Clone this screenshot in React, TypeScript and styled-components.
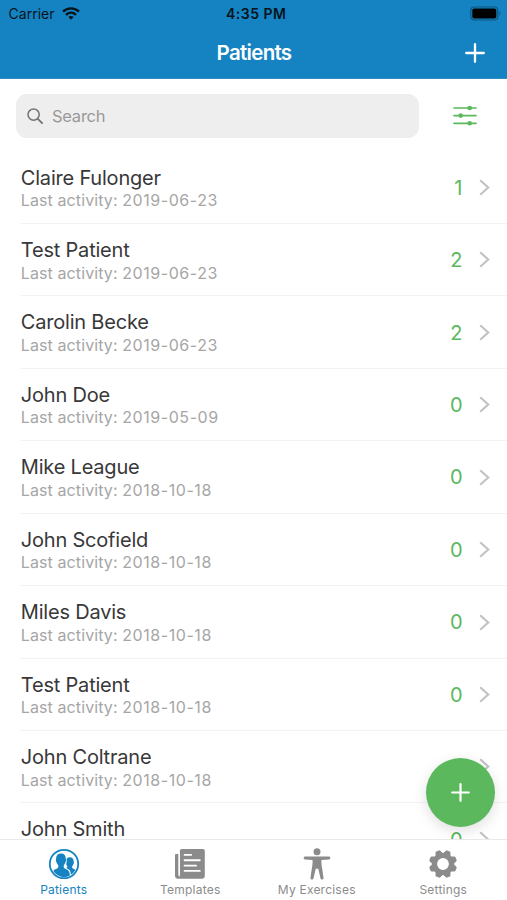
import React from "react";
import styled, { createGlobalStyle } from "styled-components";

const BLUE = "#1583c1";
const GREEN = "#5bb85d";

const GlobalStyle = createGlobalStyle`
  *, *::before, *::after { box-sizing: border-box; }
  html, body { margin: 0; padding: 0; overflow: hidden; }
  body { font-family: Inter, "Liberation Sans", sans-serif; background: #fff; }
  button { border: 0; padding: 0; background: none; font: inherit; }
  svg { display: block; flex: none; }
`;

const Screen = styled.div`
  position: relative;
  display: flex;
  flex-direction: column;
  width: 507px;
  height: 900px;
  overflow: hidden;
  background: #fff;
`;

const Header = styled.header`
  flex: none;
  height: 79px;
  background: ${BLUE};
  border-bottom: 1px solid #2f8fc6;
`;

const StatusBar = styled.div`
  display: grid;
  grid-template-columns: 1fr auto 1fr;
  align-items: center;
  height: 27px;
  padding: 0 6px 0 8.5px;
  color: #06131c;
`;

const Carrier = styled.div`
  display: flex;
  align-items: center;
  gap: 7px;
  font-size: 14px;
  letter-spacing: 0.02px;
`;

const Clock = styled.div`
  font-size: 14px;
  font-weight: 600;
  letter-spacing: 0.5px;
  padding-left: 3px;
`;

const BatterySlot = styled.div`
  justify-self: end;
`;

const NavBar = styled.div`
  display: grid;
  grid-template-columns: 1fr auto 1fr;
  align-items: center;
  height: 51px;
  padding: 0 22.5px 0 23.5px;
  color: #fff;
`;

const Title = styled.h1`
  grid-column: 2;
  margin: 0;
  font-size: 20.5px;
  line-height: 24px;
  font-weight: 600;
  letter-spacing: -0.7px;
`;

const AddButton = styled.button`
  justify-self: end;
  color: #fff;
`;

const SearchRow = styled.div`
  flex: none;
  display: flex;
  align-items: center;
  height: 72.5px;
  padding: 1.5px 30px 0 15.5px;
`;

const SearchField = styled.label`
  display: flex;
  align-items: center;
  gap: 8px;
  width: 403px;
  height: 44px;
  padding-left: 11.5px;
  border-radius: 11px;
  background: #eee;
  color: #999;
  font-size: 16.5px;
  letter-spacing: -0.25px;
`;

const FilterButton = styled.button`
  margin-left: auto;
  color: ${GREEN};
`;

const PatientList = styled.ul`
  flex: 1;
  min-height: 0;
  margin: 0;
  padding: 0;
  overflow: hidden;
  list-style: none;
`;

const PatientRow = styled.li`
  display: flex;
  align-items: center;
  height: 72.45px;
  margin-left: 20px;
  padding-right: 17px;
  border-bottom: 1px solid #f3f3f3;
`;

const PatientInfo = styled.div`
  flex: 1;
  padding: 2.6px 0 0 0.8px;
`;

const PatientName = styled.div`
  color: #383838;
  font-size: 20px;
  line-height: 24.6px;
  letter-spacing: -0.2px;
`;

const Activity = styled.div`
  color: #a6a6a6;
  font-size: 16px;
  line-height: 21.4px;
  letter-spacing: 0.1px;
`;

const ActivityDate = styled.span`
  letter-spacing: 0.56px;
`;

const Count = styled.div`
  margin-right: 16.5px;
  color: ${GREEN};
  font-size: 20px;
  padding-top: 1px;
`;

const ChevronSlot = styled.div`
  padding-top: 0.5px;
`;

const FloatingButton = styled.button`
  position: absolute;
  left: 426px;
  top: 757.5px;
  display: grid;
  place-items: center;
  width: 69px;
  height: 69px;
  border-radius: 50%;
  background: ${GREEN};
  color: #fff;
  box-shadow: 0 4px 14px rgba(0, 0, 0, 0.13);
`;

const TabBar = styled.nav`
  flex: none;
  display: grid;
  grid-template-columns: repeat(4, 126.5px);
  height: 61px;
  padding-left: 0.5px;
  border-top: 1px solid #e9e9e9;
  background: #fff;
`;

const Tab = styled.div<{ $active?: boolean }>`
  display: flex;
  flex-direction: column;
  align-items: center;
  padding-top: 7.5px;
  color: ${({ $active }) => ($active ? BLUE : "#8b8b8b")};
`;

const TabLabel = styled.span`
  margin-top: 2.5px;
  font-size: 12px;
  line-height: 16px;
  white-space: nowrap;
  letter-spacing: 0.22px;
`;

const WifiIcon = () => (
  <svg width="18" height="13" viewBox="0 0 18 13" fill="none" stroke="currentColor" strokeWidth="2.4">
    <path d="M1 4.6C5.6.3 12.4.3 17 4.6" />
    <path d="M4 7.8c2.9-2.7 7.1-2.7 10 0" />
    <path d="M6.4 10.1c1.6-1.4 3.6-1.4 5.2 0L9 12.8z" fill="currentColor" stroke="none" />
  </svg>
);

const BatteryIcon = () => (
  <svg width="31" height="15" viewBox="0 0 31 15">
    <rect x=".8" y="1" width="27" height="13" rx="3.5" fill="none" stroke="#0c5580" strokeWidth="1.2" />
    <rect x="2.3" y="2.5" width="24" height="10" rx="2" fill="#000" />
    <path d="M29.4 5.3c1.4.8 1.4 3.6 0 4.4z" fill="#0c5580" />
  </svg>
);

const PlusIcon = ({ size, stroke }: { size: number; stroke: number }) => (
  <svg width={size} height={size} viewBox={`0 0 ${size} ${size}`} stroke="currentColor" strokeWidth={stroke} strokeLinecap="round">
    <path d={`M1.2 ${size / 2}H${size - 1.2}M${size / 2} 1.2V${size - 1.2}`} />
  </svg>
);

const SearchIcon = () => (
  <svg width="17" height="17" viewBox="0 0 17 17" fill="none" stroke="#747474" strokeWidth="1.5">
    <circle cx="6.6" cy="6.6" r="5.6" />
    <path d="M10.6 10.6l5 5" strokeWidth="1.8" />
  </svg>
);

const SlidersIcon = () => (
  <svg width="24" height="20" viewBox="0 0 24 20" stroke="currentColor" strokeWidth="1.7" strokeLinecap="round">
    <path d="M1 2h22M1 9.6h22M1 17.3h22" />
    <g fill="currentColor" stroke="none">
      <circle cx="16.7" cy="2" r="2.3" />
      <circle cx="7.7" cy="9.6" r="2.3" />
      <circle cx="16.7" cy="17.3" r="2.3" />
    </g>
  </svg>
);

const ChevronIcon = () => (
  <svg width="11" height="17" viewBox="0 0 11 17" fill="none" stroke="#c3c3c6" strokeWidth="2.2">
    <path d="M1.2 1.2l8 7.3-8 7.3" />
  </svg>
);

const PatientsIcon = () => (
  <svg width="32" height="32" viewBox="0 0 32 32">
    <circle cx="16" cy="16" r="14.2" fill="#fff" stroke="currentColor" strokeWidth="1.8" />
    <path
      fill="currentColor"
      d="M13 5.6c3.1 0 4.9 2.1 4.8 5.2 0 .8.5 1.1.2 2.3-.2.8-.6 1-.8 1.6-.3 1.1-.8 1.8-1.3 2.4-.3.7-.2 1.9.1 2.7.5 1.1 3.9 1.8 4.9 3.4.9 1.5.9 3.6.8 4.6A12.6 12.6 0 0 1 5.3 22.7c1.5-1.6 4.4-1.9 4.8-3.1.2-.8.3-1.8 0-2.5-.6-.6-1.1-1.4-1.4-2.4-.2-.6-.6-.8-.8-1.6-.3-1.2.2-1.5.2-2.3-.1-3.1 1.8-5.2 4.9-5.2z"
    />
    <path
      fill="currentColor"
      d="M21.8 9.2c2.7 0 4 1.8 3.9 4.2 0 .7.4.9.1 1.8-.1.6-.4.8-.6 1.2-.2.9-.6 1.3-1 1.8-.2.7-.1 1.3.2 1.8.5.8 2.2 1 3.1 1.8a12.7 12.7 0 0 1-4.7 5c0-1.6-.3-3.3-1.2-4.5-.8-1-2.3-1.6-3.4-2.2.6-.4 1.1-1 1.2-1.9-.5-.5-.9-1-1.1-1.8-.2-.4-.1-.7.1-1.3.5-1 .5-1.9.2-3.1-.3-1.9 1.1-2.8 3.2-2.8z"
    />
  </svg>
);

const TemplatesIcon = () => (
  <svg width="32" height="32" viewBox="0 0 32 32" fill="currentColor">
    <path d="M1 7.2C1 6.5 1.5 6 2.2 6h2.4v21.8c0 .8 1.3.8 1.3 0V3c0-1.2.8-1.9 1.9-1.9h21.1c1.1 0 1.9.7 1.9 1.9v24.7c0 2-1.1 3-3 3H4c-2 0-3-1-3-3z" />
    <path d="M5.2 6v20.5" stroke="#fff" strokeWidth="1.3" />
    <path d="M10.6 6.9h6.5M10.6 12.3h15.2M10.6 17.6h11.5M10.6 22.9h15.2" stroke="#fff" strokeWidth="1.9" strokeLinecap="round" />
  </svg>
);

const PersonIcon = () => (
  <svg width="32" height="32" viewBox="0 0 32 32" fill="currentColor">
    <circle cx="16" cy="3.7" r="3.5" />
    <path d="M4.1 8.5h23.8a1.4 1.4 0 0 1 0 2.9l-7.4.6c-.4 3 .3 6.3.8 9.3l1.2 8.4c.2 2.1-2.6 2.4-3 .5l-2.2-9.5h-2.6l-2.2 9.5c-.4 1.9-3.2 1.6-3-.5l1.2-8.4c.5-3 1.2-6.3.8-9.3l-7.4-.6a1.4 1.4 0 0 1 0-2.9z" />
  </svg>
);

const GearIcon = () => (
  <svg width="32" height="32" viewBox="-16 -16 32 32">
    <circle r="8.5" fill="none" stroke="currentColor" strokeWidth="5.2" />
    {[22.5, 67.5, 112.5, 157.5, 202.5, 247.5, 292.5, 337.5].map((angle) => (
      <path key={angle} d="M-4.2-9.5L-2.5-13.4q.3-.7 1-.7h3q.7 0 1 .7l1.7 3.9z" fill="currentColor" transform={`rotate(${angle})`} />
    ))}
  </svg>
);

const patients = [
  { name: "Claire Fulonger", date: "2019-06-23", count: 1 },
  { name: "Test Patient", date: "2019-06-23", count: 2 },
  { name: "Carolin Becke", date: "2019-06-23", count: 2 },
  { name: "John Doe", date: "2019-05-09", count: 0 },
  { name: "Mike League", date: "2018-10-18", count: 0 },
  { name: "John Scofield", date: "2018-10-18", count: 0 },
  { name: "Miles Davis", date: "2018-10-18", count: 0 },
  { name: "Test Patient", date: "2018-10-18", count: 0 },
  { name: "John Coltrane", date: "2018-10-18", count: 0 },
  { name: "John Smith", date: "2018-10-18", count: 0 },
];

const tabs = [
  { label: "Patients", icon: <PatientsIcon />, active: true },
  { label: "Templates", icon: <TemplatesIcon /> },
  { label: "My Exercises", icon: <PersonIcon /> },
  { label: "Settings", icon: <GearIcon /> },
];

export default function App() {
  return (
    <>
      <GlobalStyle />
      <Screen>
        <Header>
          <StatusBar>
            <Carrier>
              Carrier <WifiIcon />
            </Carrier>
            <Clock>4:35 PM</Clock>
            <BatterySlot>
              <BatteryIcon />
            </BatterySlot>
          </StatusBar>
          <NavBar>
            <Title>Patients</Title>
            <AddButton aria-label="Add patient">
              <PlusIcon size={20} stroke={2.3} />
            </AddButton>
          </NavBar>
        </Header>
        <SearchRow>
          <SearchField>
            <SearchIcon />
            Search
          </SearchField>
          <FilterButton aria-label="Filter">
            <SlidersIcon />
          </FilterButton>
        </SearchRow>
        <PatientList>
          {patients.map((patient, index) => (
            <PatientRow key={index}>
              <PatientInfo>
                <PatientName>{patient.name}</PatientName>
                <Activity>
                  Last activity: <ActivityDate>{patient.date}</ActivityDate>
                </Activity>
              </PatientInfo>
              <Count>{patient.count}</Count>
              <ChevronSlot>
                <ChevronIcon />
              </ChevronSlot>
            </PatientRow>
          ))}
        </PatientList>
        <FloatingButton aria-label="Add">
          <PlusIcon size={19} stroke={2.2} />
        </FloatingButton>
        <TabBar>
          {tabs.map((tab) => (
            <Tab key={tab.label} $active={tab.active}>
              {tab.icon}
              <TabLabel>{tab.label}</TabLabel>
            </Tab>
          ))}
        </TabBar>
      </Screen>
    </>
  );
}
